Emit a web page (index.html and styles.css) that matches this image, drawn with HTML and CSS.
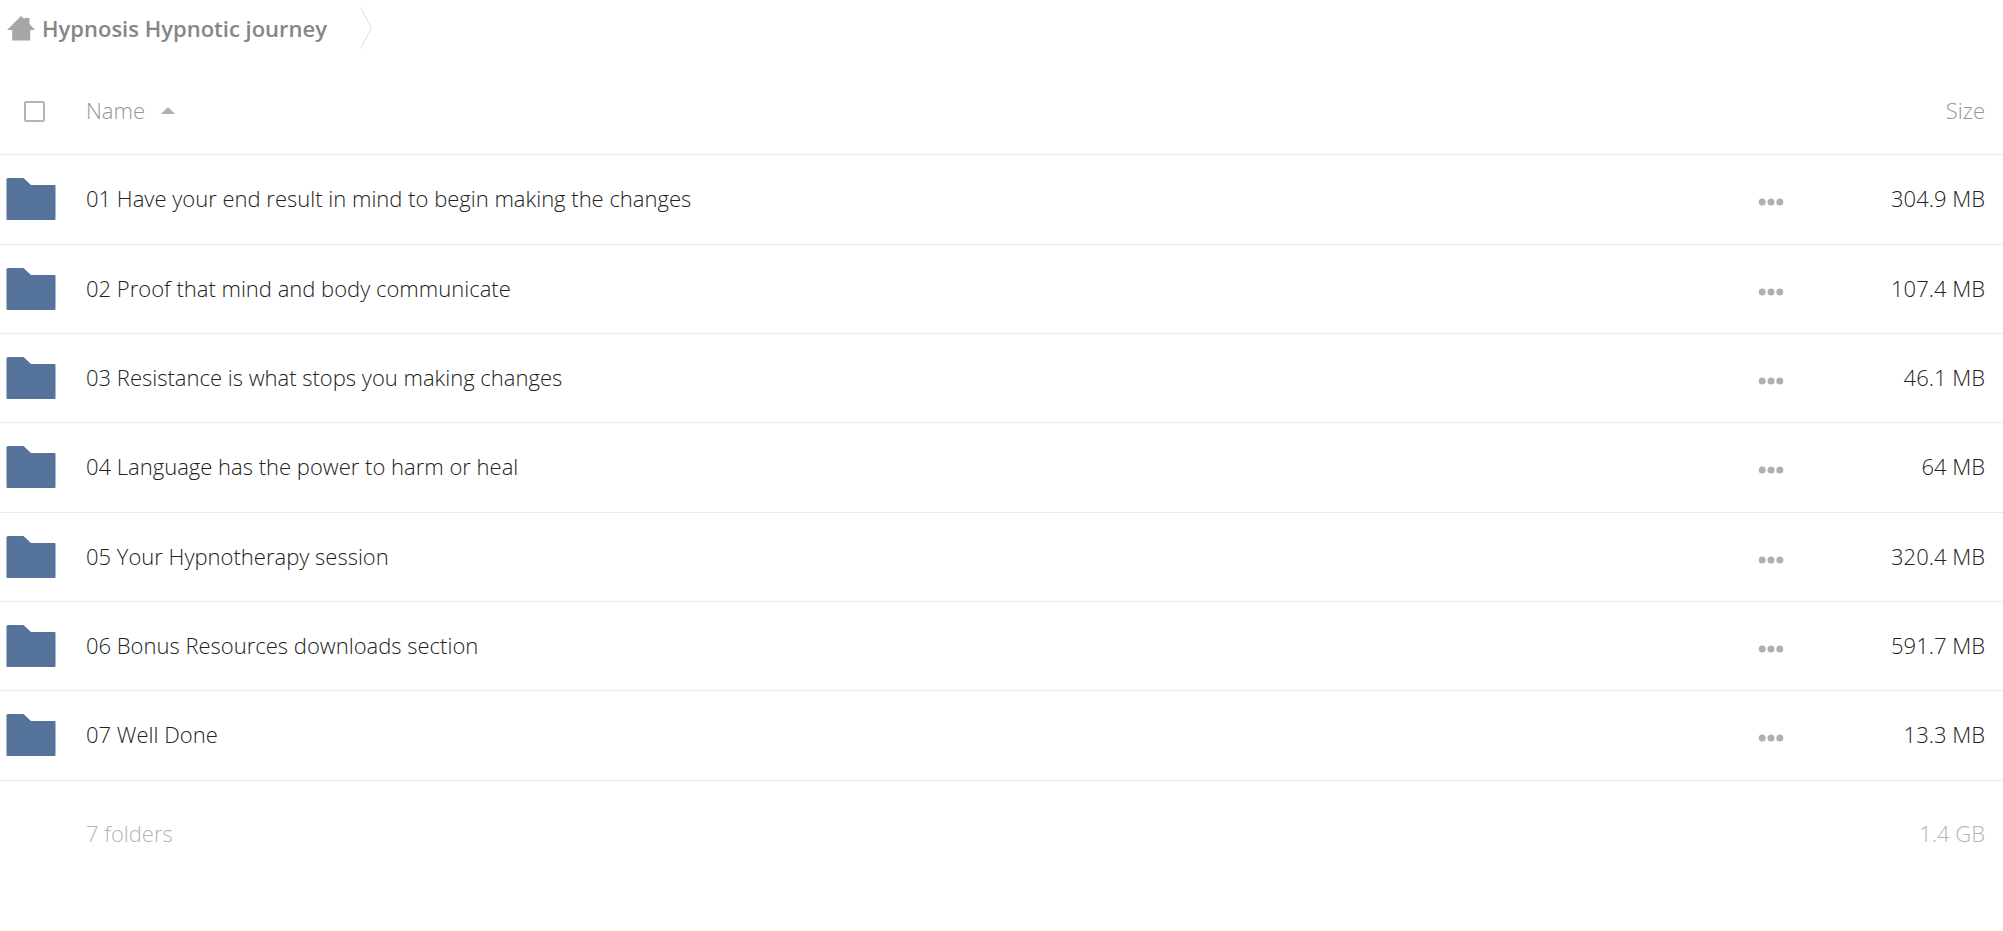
FILE: index.html
```
<!DOCTYPE html>
<html lang="en">
<head>
<meta charset="utf-8">
<title>Hypnosis Hypnotic journey</title>
<link rel="stylesheet" href="styles.css">
</head>
<body>
<svg class="symbols" aria-hidden="true">
  <symbol id="folder" viewBox="0 0 50 42"><path d="M.5 1.5Q.5 0 2 0H17.500L25 7H48.500Q49.500 7 49.500 8V41Q49.500 42 48.500 42H1.500Q.5 42 .5 41Z"/></symbol>
  <symbol id="dots" viewBox="0 0 26 8"><circle cx="4.200" cy="4" r="3.500"/><circle cx="13" cy="4" r="3.500"/><circle cx="21.800" cy="4" r="3.500"/></symbol>
</svg>
<nav class="crumbs" aria-label="Breadcrumb">
  <a class="crumb" href="#">
    <svg class="home" viewBox="0 0 28 25" aria-hidden="true"><path d="M14 0 17.500 3.200V2H22.500V8L28 14H23.200V24.500H5.200V14H0Z"/></svg>
    <span>Hypnosis Hypnotic journey</span>
  </a>
  <svg class="chevron" viewBox="0 0 12 42" aria-hidden="true"><path d="M.5.5 11.500 21 .5 41.500"/></svg>
</nav>
<table class="files">
  <thead>
    <tr>
      <th class="mark"><input class="tick" type="checkbox" aria-label="Select all"></th>
      <th class="name"><button class="sort" type="button">Name <svg class="arrow" viewBox="0 0 14 7" aria-hidden="true"><path d="M7 0 14 7H0Z"/></svg></button></th>
      <th class="actions"></th>
      <th class="size"><button class="sort" type="button">Size</button></th>
    </tr>
  </thead>
  <tbody>
    <tr><td class="mark"><svg class="folder"><use href="#folder"/></svg></td><td class="name"><a href="#">01 Have your end result in mind to begin making the changes</a></td><td class="actions"><button class="more" type="button" aria-label="Actions"><svg class="dots"><use href="#dots"/></svg></button></td><td class="size">304.9 MB</td></tr>
    <tr><td class="mark"><svg class="folder"><use href="#folder"/></svg></td><td class="name"><a href="#">02 Proof that mind and body communicate</a></td><td class="actions"><button class="more" type="button" aria-label="Actions"><svg class="dots"><use href="#dots"/></svg></button></td><td class="size">107.4 MB</td></tr>
    <tr><td class="mark"><svg class="folder"><use href="#folder"/></svg></td><td class="name"><a href="#">03 Resistance is what stops you making changes</a></td><td class="actions"><button class="more" type="button" aria-label="Actions"><svg class="dots"><use href="#dots"/></svg></button></td><td class="size">46.1 MB</td></tr>
    <tr><td class="mark"><svg class="folder"><use href="#folder"/></svg></td><td class="name"><a href="#">04 Language has the power to harm or heal</a></td><td class="actions"><button class="more" type="button" aria-label="Actions"><svg class="dots"><use href="#dots"/></svg></button></td><td class="size">64 MB</td></tr>
    <tr><td class="mark"><svg class="folder"><use href="#folder"/></svg></td><td class="name"><a href="#">05 Your Hypnotherapy session</a></td><td class="actions"><button class="more" type="button" aria-label="Actions"><svg class="dots"><use href="#dots"/></svg></button></td><td class="size">320.4 MB</td></tr>
    <tr><td class="mark"><svg class="folder"><use href="#folder"/></svg></td><td class="name"><a href="#">06 Bonus Resources downloads section</a></td><td class="actions"><button class="more" type="button" aria-label="Actions"><svg class="dots"><use href="#dots"/></svg></button></td><td class="size">591.7 MB</td></tr>
    <tr><td class="mark"><svg class="folder"><use href="#folder"/></svg></td><td class="name"><a href="#">07 Well Done</a></td><td class="actions"><button class="more" type="button" aria-label="Actions"><svg class="dots"><use href="#dots"/></svg></button></td><td class="size">13.3 MB</td></tr>
  </tbody>
  <tfoot>
    <tr><td class="mark"></td><td class="name">7 folders</td><td class="actions"></td><td class="size">1.4 GB</td></tr>
  </tfoot>
</table>
</body>
</html>
```
FILE: styles.css
```
* { box-sizing: border-box; }
body {
  margin: 0;
  background: #fff;
  color: #222;
  font: 300 22px/30px "Open Sans", sans-serif;
}
a { color: inherit; text-decoration: none; }
svg { display: block; }
button {
  border: 0;
  padding: 0;
  background: none;
  color: inherit;
  font: inherit;
}
.symbols { display: none; }
.crumbs {
  display: flex;
  align-items: center;
  gap: 33px;
  height: 56px;
  padding: 0 7px;
}
.crumb {
  display: flex;
  align-items: center;
  gap: 7px;
  color: #868686;
  font-weight: 600;
}
.home { width: 28px; height: 25px; fill: #a6a6a6; }
.chevron { width: 12px; height: 42px; fill: none; stroke: #ddd; }
.files {
  width: 100%;
  margin-top: 12px;
  border-collapse: collapse;
  table-layout: fixed;
}
th, td {
  height: 89px;
  padding: 0;
  border-bottom: 1px solid #ebebeb;
  font-weight: 300;
  text-align: left;
  vertical-align: middle;
}
thead th { height: 86px; color: #969696; }
tbody tr:nth-child(3n + 1) td { height: 90px; }
tfoot td { height: 107px; border: 0; color: #b4b4b4; }
.mark { width: 86px; padding-left: 6px; }
.name { padding-bottom: 2px; }
.actions { width: 100px; }
.size { width: 182px; padding: 0 18px 2px 0; text-align: right; }
.folder { width: 50px; height: 42px; fill: #55739b; }
.tick {
  display: block;
  width: 21px;
  height: 21px;
  margin: 2px 0 0 18px;
  border: 2px solid #b4b4b4;
  border-radius: 2px;
  background: #fff;
  appearance: none;
}
.sort { display: inline-flex; align-items: center; gap: 16px; }
.arrow { width: 14px; height: 7px; margin-top: 2px; fill: #b0b0b0; }
.more { display: block; margin: 6px auto 0; }
.dots { width: 26px; height: 8px; fill: #b0b0b0; }
```
